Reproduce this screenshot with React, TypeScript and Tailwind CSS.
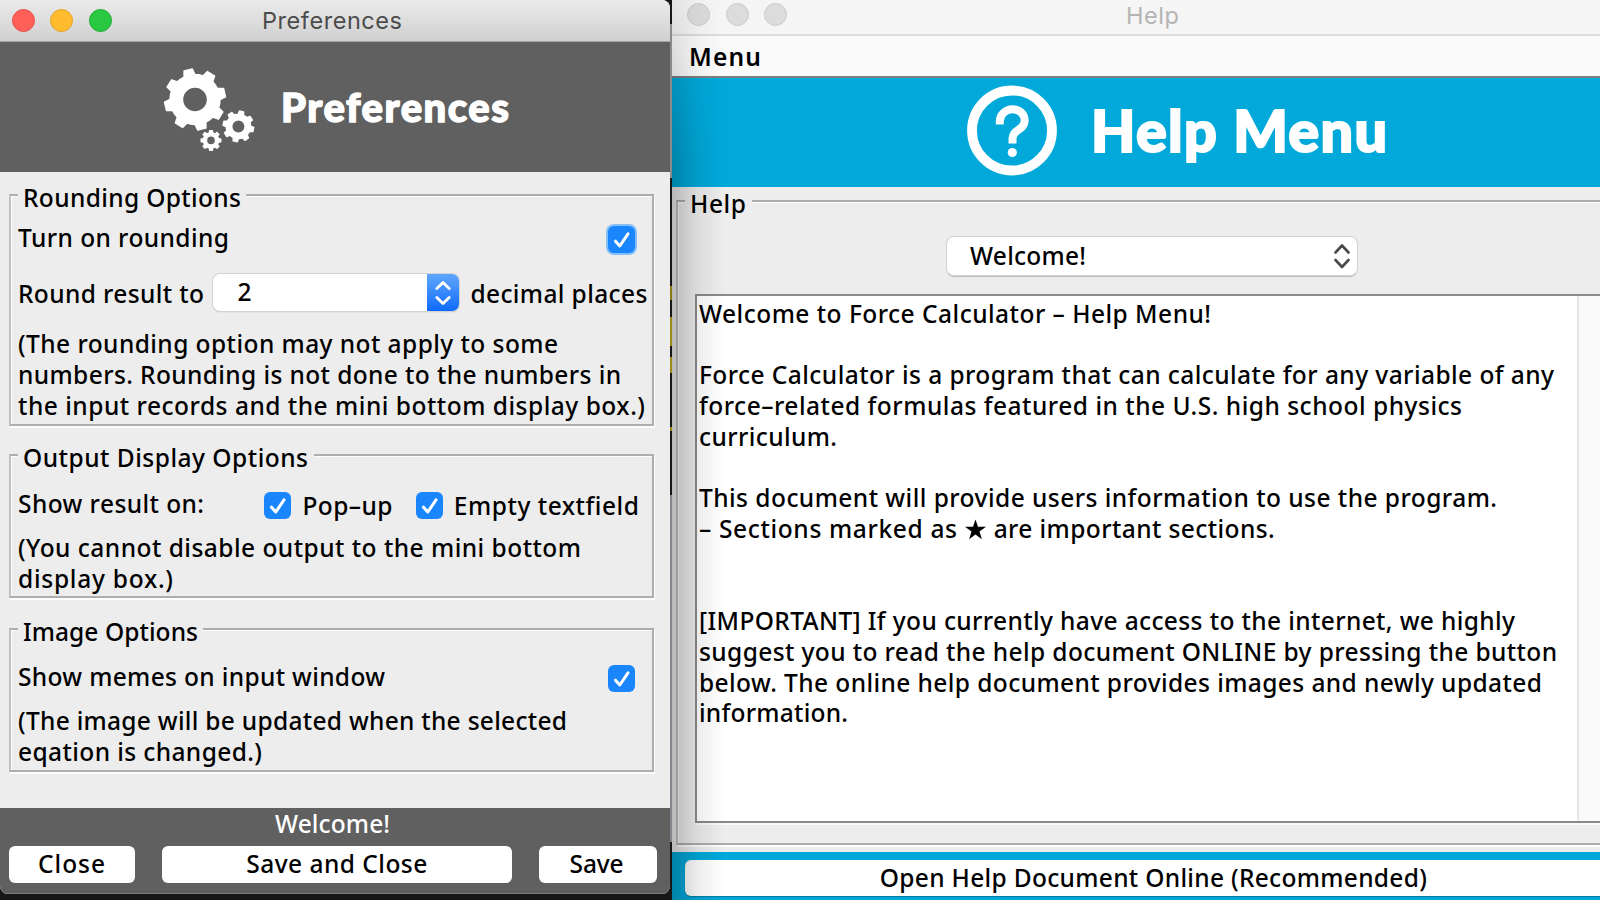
import { useLayoutEffect, useRef, type ReactNode } from "react";

/** One line of text, tracked so that it spans exactly `width` pixels. */
function Line({ width, className = "", children }: { width: number; className?: string; children: string }) {
  const ref = useRef<HTMLSpanElement>(null);
  useLayoutEffect(() => {
    const el = ref.current;
    if (!el) return;
    el.style.letterSpacing = "0px";
    const natural = el.getBoundingClientRect().width;
    el.style.letterSpacing = `${(width - natural) / Math.max(1, children.length - 1)}px`;
  }, [width, children]);
  return (
    <span ref={ref} className={`inline-block w-max shrink-0 whitespace-pre ${className}`}>
      {children}
    </span>
  );
}

function Check({ focused = false }: { focused?: boolean }) {
  return (
    <span
      className={`flex size-[27px] shrink-0 items-center justify-center rounded-[6px] bg-[#1a86fd] ${
        focused ? "shadow-[0_0_0_2px_#86bff8]" : ""
      }`}
    >
      <svg width="27" height="27" viewBox="0 0 27 27" fill="none" stroke="white" strokeWidth="3" strokeLinecap="round" strokeLinejoin="round">
        <path d="M7.5 15.2 11.8 20 20 7.8" />
      </svg>
    </span>
  );
}

function Group({ title, width, className, children }: { title: string; width: number; className: string; children: ReactNode }) {
  return (
    <fieldset
      className={`min-w-0 border-2 border-[#adadad] border-l-[#c0c0c0] pl-[7px] shadow-[inset_1px_1px_0_#fdfdfd,1px_2px_0_#fdfdfd] ${className}`}
    >
      <legend className="flex h-[34px] bg-linear-to-b from-transparent from-[8px] to-[#ededed] to-[8px] pt-[4px] pr-[5px] pl-[5px]">
        <Line width={width}>{title}</Line>
      </legend>
      {children}
    </fieldset>
  );
}

function gearPath(cx: number, cy: number, outer: number, inner: number, hole: number, start: number) {
  const pt = (r: number, deg: number) => {
    const a = (deg * Math.PI) / 180;
    return `${(cx + r * Math.cos(a)).toFixed(2)} ${(cy + r * Math.sin(a)).toFixed(2)}`;
  };
  let d = "";
  for (let i = 0; i < 8; i++) {
    const a = start + i * 45;
    d += `${i ? "L" : "M"}${pt(inner, a - 13)}L${pt(outer, a - 8)}L${pt(outer, a + 8)}L${pt(inner, a + 13)}A${inner} ${inner} 0 0 1 ${pt(inner, a + 32)}`;
  }
  return `${d}ZM${cx - hole} ${cy}a${hole} ${hole} 0 1 0 ${hole * 2} 0a${hole} ${hole} 0 1 0 ${-hole * 2} 0Z`;
}

function Gears() {
  return (
    <svg width="92" height="84" viewBox="163 68 92 84" fill="white" stroke="white" strokeWidth="1.4" strokeLinejoin="round" fillRule="evenodd">
      <path d={gearPath(195, 99.5, 30.6, 25, 12.5, -13)} />
      <path d={gearPath(238.4, 126.4, 15.4, 12.2, 6.7, -78)} />
      <path d={gearPath(211, 140.4, 9.9, 7.6, 4.5, -90)} />
    </svg>
  );
}

function PreferencesWindow() {
  return (
    <section className="flex h-[894px] w-[670px] shrink-0 flex-col overflow-hidden rounded-tr-[8px] rounded-b-[8px] bg-[#ededed]">
      <header className="flex h-[42px] shrink-0 items-start border-b border-[#a5a5a5] bg-linear-to-b from-[#ebebeb] to-[#d0d0d0] pl-[11.5px] font-['Inter',sans-serif] text-[23.5px] leading-[42px] font-normal text-[#4b4b4b]">
        <div className="mt-[9px] flex gap-[15.5px]">
          <span className="size-[23px] rounded-full border border-[#e5514a] bg-[#fe5f57]" />
          <span className="size-[23px] rounded-full border border-[#e3a325] bg-[#febc2e]" />
          <span className="size-[23px] rounded-full border border-[#1fad34] bg-[#28c840]" />
        </div>
        <Line width={140} className="ml-[150.5px]">Preferences</Line>
      </header>

      <div className="flex h-[130px] shrink-0 bg-[#606060] pt-[26px] pl-[163px]">
        <Gears />
        <Line width={228} className="mt-[14px] ml-[26px] h-[50px] font-['Lato',sans-serif] text-[40px] leading-[50px] font-black text-white [-webkit-text-stroke:1.4px_white]">
          Preferences
        </Line>
      </div>

      <div className="h-[636px] shrink-0 pt-[6px] pl-[9px]">
        <Group title="Rounding Options" width={218} className="h-[248px] w-[645px]">
          <div className="mt-[10px] flex h-[31px]">
            <Line width={211}>Turn on rounding</Line>
            <span className="mt-[4px] ml-[379px]">
              <Check focused />
            </span>
          </div>
          <div className="mt-[21px] flex h-[38px] pt-px">
            <Line width={186} className="mt-[3px]">Round result to</Line>
            <div className="-mt-px ml-[9px] flex h-[37px] w-[246px] overflow-hidden rounded-[7px] bg-white shadow-[0_0_0_1px_#d2d2d2,0_1px_1px_#a0a0a0]">
              <span className="w-[214px] pt-[2px] pl-[24px]">2</span>
              <span className="w-[32px] bg-linear-to-b from-[#5ea5fb] to-[#0869fb]">
                <svg width="32" height="37" viewBox="0 0 32 37" fill="none" stroke="white" strokeWidth="2.8" strokeLinecap="round" strokeLinejoin="round">
                  <path d="M9.800 14.500 16 8.500 22.200 14.500M9.800 23.500 16 29.500 22.200 23.500" />
                </svg>
              </span>
            </div>
            <Line width={177} className="mt-[3px] ml-[11px]">decimal places</Line>
          </div>
          <p className="mt-[17px] flex flex-col leading-[30.75px]">
            <Line width={540}>(The rounding option may not apply to some</Line>
            <Line width={603}>numbers. Rounding is not done to the numbers in</Line>
            <Line width={627}>the input records and the mini bottom display box.)</Line>
          </p>
        </Group>

        <Group title="Output Display Options" width={285} className="mt-[12px] h-[160px] w-[645px]">
          <div className="mt-[16px] flex h-[34px]">
            <Line width={186}>Show result on:</Line>
            <span className="mt-[4px] ml-[60px]">
              <Check />
            </span>
            <Line width={90} className="mt-[2px] ml-[11px]">Pop–up</Line>
            <span className="mt-[4px] ml-[23px]">
              <Check />
            </span>
            <Line width={185} className="mt-[2px] ml-[11px]">Empty textfield</Line>
          </div>
          <p className="mt-[11px] flex flex-col leading-[30.75px]">
            <Line width={563}>(You cannot disable output to the mini bottom</Line>
            <Line width={155}>display box.)</Line>
          </p>
        </Group>

        <Group title="Image Options" width={175} className="mt-[14px] h-[160px] w-[645px]">
          <div className="mt-[15px] flex h-[34px]">
            <Line width={367}>Show memes on input window</Line>
            <span className="mt-[4px] ml-[223px]">
              <Check />
            </span>
          </div>
          <p className="mt-[11px] flex flex-col leading-[30.75px]">
            <Line width={549}>(The image will be updated when the selected</Line>
            <Line width={244}>eqation is changed.)</Line>
          </p>
        </Group>
      </div>

      <footer className="h-[86px] shrink-0 border-b border-[#7b7b7b] bg-[#606060]">
        <div className="h-[38px] pl-[275px] text-white">
          <Line width={115}>Welcome!</Line>
        </div>
        <div className="flex pl-[9px] leading-[34px]">
          <button className="mr-[27px] h-[37px] w-[126px] rounded-[6px] bg-white pb-[2px]"><Line width={67}>Close</Line></button>
          <button className="mr-[27px] h-[37px] w-[350px] rounded-[6px] bg-white pb-[2px]"><Line width={181}>Save and Close</Line></button>
          <button className="h-[37px] w-[118px] rounded-[6px] bg-white pr-[3px] pb-[2px]"><Line width={54}>Save</Line></button>
        </div>
      </footer>
    </section>
  );
}

function BackgroundSliver() {
  return (
    <div className="flex w-[2px] shrink-0 flex-col bg-[#171717]">
      <div className="mt-[24px] h-[154px] bg-[#8b8b8b]" />
      <div className="mt-[108px] h-[14px] bg-[#8a7a12]" />
      <div className="mt-[17px] h-[29px] bg-[#9a8b16]" />
      <div className="mt-[11px] h-[16px] bg-[#9a8b16]" />
      <div className="mt-[54px] h-[4px] bg-[#9a8b16]" />
      <div className="mt-[64px] h-[347px] bg-[#85858c]" />
    </div>
  );
}

function HelpWindow() {
  return (
    <section className="relative flex w-[928px] shrink-0 flex-col overflow-hidden bg-[#ededed]">
      <header className="flex h-[36px] shrink-0 border-b-2 border-[#dddddd] bg-[#f5f5f5] pt-[3px] pl-[15px] font-['Inter',sans-serif] text-[23.5px] leading-[25px] font-normal text-[#b4b4b4]">
        <div className="flex gap-[15.5px]">
          <span className="size-[23px] rounded-full border border-[#cccccc] bg-[#dcdcdc]" />
          <span className="size-[23px] rounded-full border border-[#cccccc] bg-[#dcdcdc]" />
          <span className="size-[23px] rounded-full border border-[#cccccc] bg-[#dcdcdc]" />
        </div>
        <Line width={53} className="ml-[339px]">Help</Line>
      </header>
      <nav className="h-[42px] shrink-0 border-b-2 border-[#7f7f7f] bg-[#fafafa] pt-[5px] pl-[17px] font-semibold">
        <Line width={72}>Menu</Line>
      </nav>
      <div className="flex h-[109px] shrink-0 bg-[#00a9da] pt-[7px] pl-[295px]">
        <svg width="90" height="92" viewBox="967 85 90 92" fill="none" stroke="white">
          <circle cx="1012" cy="130.500" r="40" strokeWidth="9.800" />
          <path d="M999.800 124.500V121.500A12.700 12.200 0 0 1 1012.500 109.300C1019.500 109.300 1024.700 114 1024.700 120.500C1024.700 130 1012.500 129.500 1012.500 138.500V143.500" strokeWidth="8" />
          <circle cx="1012.300" cy="152.500" r="4.600" fill="white" stroke="none" />
        </svg>
        <Line width={296} className="mt-[10px] ml-[34px] h-[70px] font-['Lato',sans-serif] text-[57.5px] leading-[70px] font-black text-white [-webkit-text-stroke:2px_white]">
          Help Menu
        </Line>
      </div>

      <div className="h-[665px] shrink-0 pl-[4px]">
        <Group title="Help" width={56} className="-mt-[3px] h-[661px] w-[940px]">
          <div className="mt-[19px] ml-[262px] flex h-[38px] w-[410px] rounded-[7px] bg-white pt-[3px] pl-[23px] shadow-[0_0_0_1px_#d2d2d2,0_2px_1px_#bcbcbc]">
            <Line width={116}>Welcome!</Line>
            <svg className="mt-[-3px] ml-[247px]" width="18" height="38" viewBox="0 0 18 38" fill="none" stroke="#4a4a4a" strokeWidth="2.600" strokeLinecap="round" strokeLinejoin="round">
              <path d="M2.500 15.500 9 8.500 15.500 15.500M2.500 23 9 30 15.500 23" />
            </svg>
          </div>
          <div className="mt-[19px] ml-[10px] flex h-[529px] w-[920px] border-t-2 border-b-2 border-l-2 border-[#8a8a8a] bg-white shadow-[0_2px_0_#fafafa]">
            <div className="flex w-[880px] flex-col items-start pt-[2.5px] pl-[2px] leading-[30.77px]">
              <Line width={512}>Welcome to Force Calculator – Help Menu!</Line>
              <Line width={855} className="mt-[30.770px]">Force Calculator is a program that can calculate for any variable of any</Line>
              <Line width={763}>force–related formulas featured in the U.S. high school physics</Line>
              <Line width={138}>curriculum.</Line>
              <Line width={798} className="mt-[30.770px]">This document will provide users information to use the program.</Line>
              <div className="flex">
                <Line width={258}>– Sections marked as</Line>
                <svg className="mt-[5px] ml-[7px]" width="21" height="21" viewBox="0 0 22 21">
                  <path d="M11 0 13.600 7.700H22L15.200 12.600 17.700 20.600 11 15.700 4.300 20.600 6.800 12.600 0 7.700H8.400Z" />
                </svg>
                <Line width={281} className="ml-[8px]">are important sections.</Line>
              </div>
              <Line width={816} className="mt-[61.540px]">[IMPORTANT] If you currently have access to the internet, we highly</Line>
              <Line width={858}>suggest you to read the help document ONLINE by pressing the button</Line>
              <Line width={843}>below. The online help document provides images and newly updated</Line>
              <Line width={149}>information.</Line>
            </div>
            <div className="w-[30px] border-l-2 border-[#e6e6e6] bg-[#fafafa]" />
          </div>
        </Group>
      </div>

      <footer className="h-[48px] shrink-0 bg-[#00a9da] pt-[8px] pl-[13px]">
        <button className="h-[36px] w-[940px] rounded-[6px] bg-white pr-[3px] pb-px leading-[35px] shadow-[0_1px_1px_#0079a0]">
          <Line width={547}>Open Help Document Online (Recommended)</Line>
        </button>
      </footer>

      <div className="pointer-events-none absolute inset-y-0 left-0 w-[52px] bg-linear-to-r from-black/22 via-black/7 to-transparent [mask-image:linear-gradient(to_bottom,rgba(0,0,0,0.3),black_160px)]" />
    </section>
  );
}

export default function App() {
  return (
    <main className="flex h-[900px] w-[1600px] overflow-hidden bg-[#171717] font-['Noto_Sans',sans-serif] text-[24.5px] leading-[31px] font-medium text-black">
      <PreferencesWindow />
      <BackgroundSliver />
      <HelpWindow />
    </main>
  );
}
